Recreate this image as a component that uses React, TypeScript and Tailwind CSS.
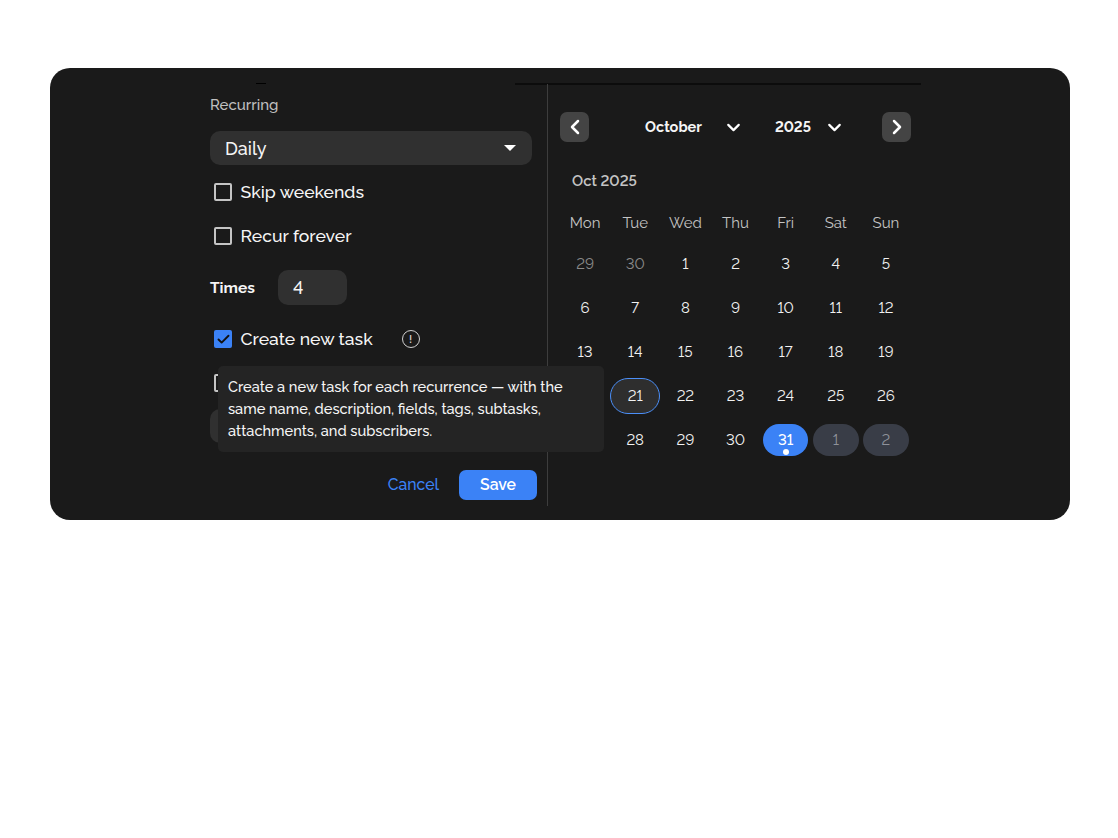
import { Check, ChevronDown, ChevronLeft, ChevronRight } from 'lucide-react';

const WEEKDAYS = ['Mon', 'Tue', 'Wed', 'Thu', 'Fri', 'Sat', 'Sun'];

const WEEKS = [
  ['29', '30', '1', '2', '3', '4', '5'],
  ['6', '7', '8', '9', '10', '11', '12'],
  ['13', '14', '15', '16', '17', '18', '19'],
  ['20', '21', '22', '23', '24', '25', '26'],
  ['27', '28', '29', '30', '31', '1', '2'],
];

function Box({ label, checked }: { label: string; checked?: boolean }) {
  return (
    <div className="flex h-[44px] items-center pl-[4px]">
      {checked ? (
        <span className="flex h-[18px] w-[18px] items-center justify-center rounded-[2px] bg-[#3b82f6]">
          <Check size={15} strokeWidth={3} color="#111" />
        </span>
      ) : (
        <span className="h-[18px] w-[18px] rounded-[2px] border-2 border-[#c4c4c4]" />
      )}
      <span className="ml-[8.5px] text-[17.6px] font-medium leading-[24px] text-[#f5f5f5]">{label}</span>
      {checked && (
        <span className="ml-[29px] flex h-[18px] w-[18px] items-center justify-center rounded-full border border-[#d0d0d0] text-[11px] font-semibold leading-none text-[#d0d0d0]">!</span>
      )}
    </div>
  );
}

function Day({ week, idx, value }: { week: number; idx: number; value: string }) {
  const muted = week === 0 && idx < 2;
  const today = week === 3 && idx === 1;
  const selected = week === 4 && idx === 4;
  const next = week === 4 && idx > 4;
  let cls = 'text-[#f2f2f2]';
  if (muted) cls = 'text-[#8a8a8a]';
  if (today) cls = 'h-[36px] w-[50px] rounded-[18px] border border-[#4b8ff8] bg-[#2e2e2e] text-[#f2f2f2]';
  if (selected) cls = 'relative h-[32px] w-[45px] rounded-[16px] bg-[#3b82f6] font-medium text-white';
  if (next) cls = 'h-[32px] w-[46px] rounded-[16px] bg-[#393d47] text-[#8f929a]';
  return (
    <div className="flex h-[44px] items-center justify-center">
      <span className={`flex h-[32px] w-[45px] items-center justify-center pt-[1px] text-[15px] ${cls}`}>
        {value}
        {selected && <span className="absolute bottom-[1px] left-1/2 h-[6px] w-[6px] -translate-x-1/2 rounded-full bg-white" />}
      </span>
    </div>
  );
}

export default function App() {
  return (
    <div className="h-[838px] w-[1118px] bg-white pl-[50px] pt-[68px] font-['Raleway','Lato','Noto_Sans',sans-serif] lining-nums">
      <div className="relative h-[452px] w-[1020px] rounded-[20px] bg-[#1a1a1a] pl-[160px] pt-[16px]">
        <div className="absolute left-[206px] top-[15px] h-[1px] w-[10px] bg-black" />
        <div className="absolute left-[465px] top-[15px] h-[2px] w-[406px] bg-[#0c0c0c]" />

        <div className="flex h-[422px]">
          <div className="relative w-[338px] border-r border-[#3d3d3d] pr-[15px]">
            <div className="pt-[12px] text-[15px] font-medium leading-[18px] text-[#c0c0c0]">Recurring</div>
            <div className="mt-[17px] flex h-[34px] items-center justify-between rounded-[10px] bg-[#303030] pl-[15px] pr-[16px] text-[18px] font-medium text-[#f5f5f5]">
              Daily
              <span className="h-0 w-0 border-x-[6.5px] border-t-[6px] border-x-transparent border-t-white" />
            </div>
            <div className="mt-[5px]">
              <Box label="Skip weekends" />
              <Box label="Recur forever" />
            </div>
            <div className="mt-[12px] flex items-center">
              <span className="text-[15.5px] font-bold text-[#f5f5f5]">Times</span>
              <span className="ml-[23px] flex h-[35px] w-[69px] items-center rounded-[10px] bg-[#303030] pl-[15px] text-[18px] font-medium text-[#f5f5f5]">4</span>
            </div>
            <div className="mt-[12px]">
              <Box label="Create new task" checked />
              <Box label="Copy task" />
            </div>
            <div className="mt-[4px] h-[34px] w-[322px] rounded-[10px] bg-[#303030]" />
            <div className="-mr-[5px] mt-[27px] flex items-center justify-end gap-[20px]">
              <span className="text-[15.8px] font-medium text-[#3b82f6]">Cancel</span>
              <span className="flex h-[30px] w-[78px] items-center justify-center rounded-[7px] bg-[#3b82f6] text-[15.8px] font-semibold text-white">Save</span>
            </div>
            <div className="absolute left-[8px] top-[282px] h-[86px] w-[386px] rounded-[5px] bg-[#242424] px-[10px] pt-[10px] text-[14.6px] font-medium leading-[22px] text-[#f5f5f5]">
              Create a new task for each recurrence — with the same name, description, fields, tags, subtasks, attachments, and subscribers.
            </div>
          </div>

          <div className="box-content w-[351px] pl-[12px] pt-[28px]">
            <div className="flex h-[30px] w-[351px] items-center">
              <span className="flex h-[30px] w-[29px] items-center justify-center rounded-[7px] bg-[#444444]">
                <ChevronLeft size={24} color="#fff" strokeWidth={2.5} />
              </span>
              <div className="ml-[56px] flex items-center text-[14.5px] font-bold text-[#f5f5f5]">
                <span>October</span>
                <ChevronDown size={21} color="#fff" strokeWidth={2.5} className="ml-[21px]" />
                <span className="ml-[31px]">2025</span>
                <ChevronDown size={21} color="#fff" strokeWidth={2.5} className="ml-[13px]" />
              </div>
              <span className="ml-auto flex h-[30px] w-[29px] items-center justify-center rounded-[7px] bg-[#444444]">
                <ChevronRight size={24} color="#fff" strokeWidth={2.5} />
              </span>
            </div>
            <div className="mt-[29px] pl-[12px] text-[14.8px] font-semibold leading-[20px] text-[#c4c4c4]">Oct 2025</div>
            <div className="mt-[21px] grid grid-cols-7 text-center text-[15px] leading-[22px] text-[#c4c4c4]">
              {WEEKDAYS.map(d => (
                <div key={d}>{d}</div>
              ))}
            </div>
            <div className="mt-[8px]">
              {WEEKS.map((w, i) => (
                <div key={i} className="grid grid-cols-7">
                  {w.map((d, j) => (
                    <Day key={j} week={i} idx={j} value={d} />
                  ))}
                </div>
              ))}
            </div>
          </div>
        </div>
      </div>
    </div>
  );
}
